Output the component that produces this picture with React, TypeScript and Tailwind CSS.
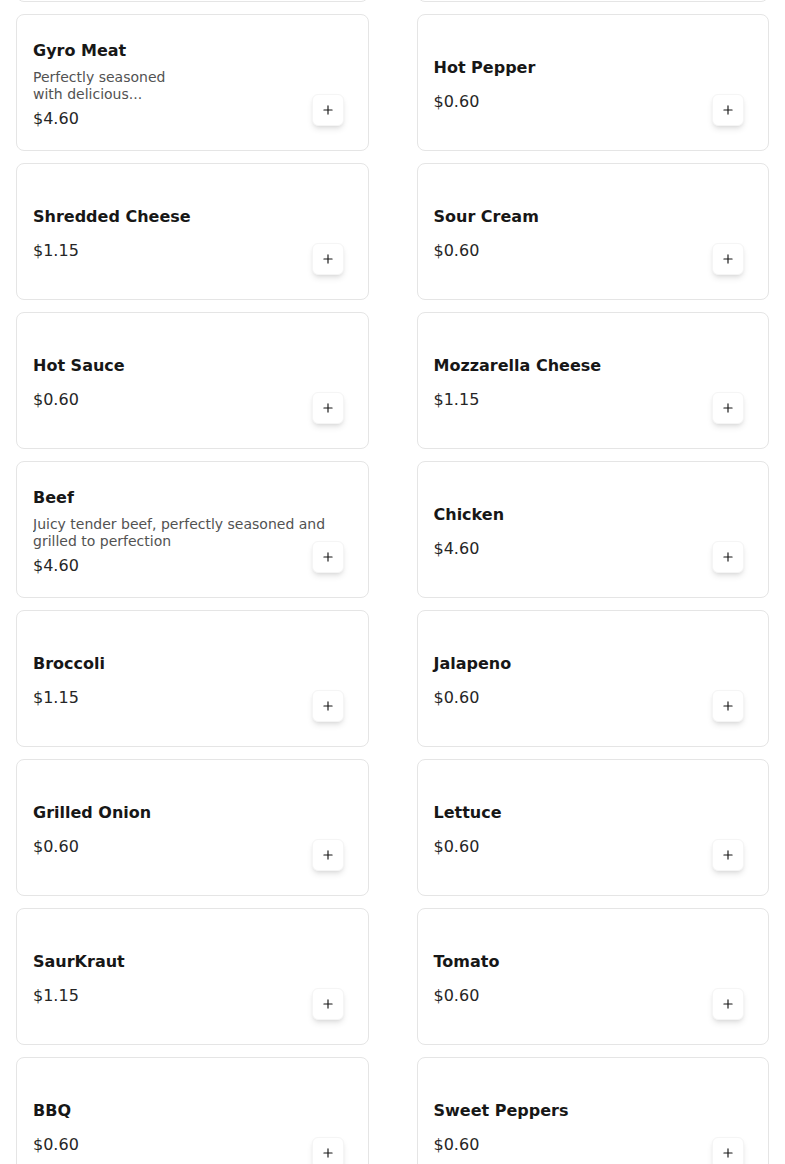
import { Plus } from "lucide-react";

type Item = {
  name: string;
  price: string;
  description?: string;
  narrow?: boolean;
};

const items: Item[] = [
  { name: "Gyro Meat", price: "$4.60", description: "Perfectly seasoned with delicious...", narrow: true },
  { name: "Hot Pepper", price: "$0.60" },
  { name: "Shredded Cheese", price: "$1.15" },
  { name: "Sour Cream", price: "$0.60" },
  { name: "Hot Sauce", price: "$0.60" },
  { name: "Mozzarella Cheese", price: "$1.15" },
  { name: "Beef", price: "$4.60", description: "Juicy tender beef, perfectly seasoned and grilled to perfection" },
  { name: "Chicken", price: "$4.60" },
  { name: "Broccoli", price: "$1.15" },
  { name: "Jalapeno", price: "$0.60" },
  { name: "Grilled Onion", price: "$0.60" },
  { name: "Lettuce", price: "$0.60" },
  { name: "SaurKraut", price: "$1.15" },
  { name: "Tomato", price: "$0.60" },
  { name: "BBQ", price: "$0.60" },
  { name: "Sweet Peppers", price: "$0.60" },
];

function ItemCard({ item }: { item: Item }) {
  return (
    <div
      className={`relative flex h-[137px] flex-col justify-center rounded-lg border border-neutral-200 bg-white px-4 pt-[5px] ${
        item.description ? "pb-[1px]" : ""
      }`}
    >
      <h3 className="text-base font-bold leading-6 text-neutral-900">{item.name}</h3>
      {item.description ? (
        <p
          className={`mt-[6px] line-clamp-2 text-sm leading-[17px] text-neutral-600 ${
            item.narrow ? "max-w-[150px]" : "pr-2"
          }`}
        >
          {item.description}
        </p>
      ) : null}
      <p className={`${item.description ? "mt-1" : "mt-[10px]"} text-base leading-6 text-neutral-800`}>
        {item.price}
      </p>
      <button
        type="button"
        className="absolute bottom-6 right-6 flex h-8 w-8 items-center justify-center rounded-md border border-neutral-100 bg-white text-neutral-900 shadow-md"
      >
        <Plus className="h-3.5 w-3.5" strokeWidth={2} />
      </button>
    </div>
  );
}

export default function App() {
  return (
    <div
      className="min-h-screen overflow-hidden bg-white"
      style={{ fontFamily: '"DejaVu Sans", sans-serif' }}
    >
      <div className="-mt-[135px] grid grid-cols-2 gap-x-12 gap-y-3 px-4">
        <div className="h-[137px] rounded-lg border border-neutral-200 bg-white" />
        <div className="h-[137px] rounded-lg border border-neutral-200 bg-white" />
        {items.map((item) => (
          <ItemCard key={item.name} item={item} />
        ))}
      </div>
    </div>
  );
}
